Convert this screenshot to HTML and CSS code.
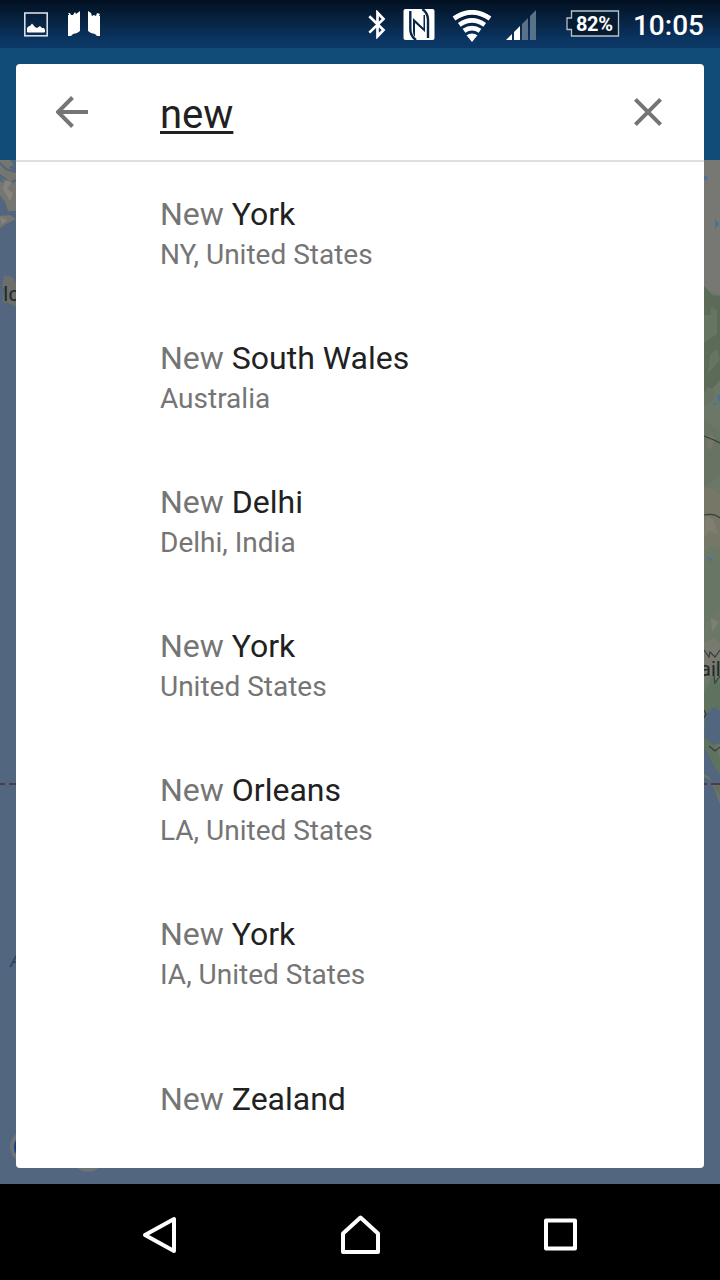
FILE: index.html
```html
<!DOCTYPE html>
<html lang="en">
<head>
<meta charset="utf-8">
<title>Place search</title>
<link rel="stylesheet" href="styles.css">
</head>
<body>
<div class="screen">
  <header class="status">
    <svg class="picture" width="24" height="25" viewBox="0 0 24 25"><rect x=".8" y="1" width="22.4" height="22.8" fill="none" stroke="#d7dde4" stroke-width="1.6"/><path d="M3 20v-4l2-2 1 0 2-2.500 3 3.500 2 1 3-2 2 2h2l1 2v2l-1 .500H4z" fill="#fff"/></svg>
    <svg class="folds" width="32" height="25" viewBox="0 0 32 25"><path d="M0 2.500 2 2l1 2h2l2-3 1 2 4-3v20l-3 2-4 1-2 2H0V4h1V3H0zM20 0l3 2 1 3 2-1 2 1 1-3 3 1-1 2h1v20h-3l-2-2-4-1-3-2z" fill="#fff"/></svg>
    <svg class="bluetooth" width="18" height="29" viewBox="0 0 18 29"><path d="M1.300 6.300 15.500 20 9.500 26.300V2.700L15.500 9 1.300 22.600" fill="none" stroke="#fff" stroke-width="2.700"/></svg>
    <svg class="nfc" width="32" height="31" viewBox="0 0 32 31"><rect x=".5" width="31" height="31" rx="2" fill="#fff"/><path d="M7.300 2v18q0 7 5.700 11M25 29V11q0-7-5.700-11" fill="none" stroke="#092848" stroke-width="2.400"/><path d="M10.500 9.500 21.500 18V4h-1.500v10.500" fill="none"/><path d="M10 9 20.500 19V6l1.500 0v17L12 14v14q-2-2-2-5z" fill="#092848"/></svg>
    <svg class="wifi" width="40" height="32" viewBox="0 0 40 32"><path d="M2 8.500Q20-4 38 8.500M7.300 14.800q12.700-9 25.400 0M12 20.800q8-5.500 16 0" fill="none" stroke="#fff" stroke-width="4.700"/><path d="M14.500 25.300q5.500-3.500 11 0L20 32z" fill="#fff"/></svg>
    <svg class="signal" width="31" height="30" viewBox="0 0 31 30"><path d="M0 30l6-6v6zM8 30v-8l6-6v14z" fill="#fff"/><path d="M16 30V14l6-6v22zM24 30V6l6-6v30z" fill="#597189"/></svg>
    <div class="battery"><svg width="54" height="28" viewBox="0 0 54 28"><path d="M5.500 1H52.500V26H5.500V19.500H1V8H5.500z" fill="#061a30" stroke="#b7c1cb" stroke-width="1.300"/></svg><span>82%</span></div>
    <time>10:05</time>
  </header>
  <main class="stage">
    <svg class="map" width="720" height="1024" viewBox="0 160 720 1024">
      <rect y="160" width="720" height="1024" fill="#53667f"/>
      <path d="M0 160h10l4 5-5 2 7 5v39H8l-3-9-5-7v-14l5 2-5-7zM0 216l10-1 6 4-10 5-6 4z" fill="#757670"/>
      <path d="M0 163l6 6 10 3M0 175l10 8 6-3" stroke="#53667f" stroke-width="2" fill="none"/>
      <path d="M5 180l7 2-5 7 6 4-3 8-7-12zM0 217l7 3-5 4z" fill="#85847e"/>
      <path d="M4 275l4 2 2-2 6 7v25l-8-4-6-1 3-13-3-3z" fill="#6b6e6b"/>
      <text class="country" x="3" y="301">Iceland</text>
      <path d="M704 160h16v644l-16-18z" fill="#6b7868"/>
      <path d="M704 160h16v134l-8-2-8-5z" fill="#777873"/>
      <path d="M704 286l8 9 8 1v84l-7 8-9 5z" fill="#5c6a58"/>
      <path d="M704 315h7v-8l6 3v24l-13 9zM710 355l7-6 3 11-8 9-4 4zM707 387l8 3-1 9-10 8v-12z" fill="#687463"/>
      <path d="M704 420l11 8 5 5v40l-16 17z" fill="#687463"/>
      <path d="M710 434l5 4-4 12-5-4zM704 487l10 2 6 6v55l-9-4-7 5z" fill="#777767"/>
      <path d="M706 516l7 3 5 15-9-3-5 7zM705 586l10 1-2 12-8-4zM711 618l8 4-7 10z" fill="#807e73"/>
      <path d="M704 560h16v48l-8 6-8 14z" fill="#687765"/>
      <path d="M704 642l10-4 6 5v17l-8 15-8 5z" fill="#78796f"/>
      <path d="M704 692l8-14 8 5v60l-5 3 5 12v42l-16-38z" fill="#5f7260"/>
      <path d="M706 714l8-7 6 4v32l-7 2-9-8z" fill="#53667f"/>
      <path d="M704 747l8 15 8 13v10h-16z" fill="#53667f"/>
      <path d="M704 779l10 8 6 17v30h-16z" fill="#53667f"/>
      <path d="M704 777l8 4 8 23v-7l-11-20-5-3z" fill="#6c776a"/>
      <path d="M704 436l10 4 6 3M704 515q10-2 16 3M704 650l5 7 1-5 5 5 5-7M714 676l1 7 5-7M704 718l2-4-2-4M709 746l6 5 5-4" fill="none" stroke="#363e3d" stroke-width="1.200"/>
      <path d="M715 219l4 5-4 5zM717 397l3-3v9zM711 405l4-3 2 2zM706 556l6 3-1 3z" fill="#476f9f"/><circle cx="705.500" cy="178" r="2" fill="#476f9f"/>
      <text class="country" x="700" y="676">aila</text>
      <path d="M0 784H720" stroke="#55374a" stroke-width="2" stroke-dasharray="9 4" stroke-dashoffset="4"/>
      <text class="ocean" x="10" y="967">Atlantic</text>
      <circle cx="27" cy="1147" r="17" fill="#6c7377"/><circle cx="27" cy="1147" r="13" fill="#173f87"/><circle cx="88" cy="1155" r="17" fill="#6c7377"/>
    </svg>
    <section class="card">
      <div class="search">
        <svg class="back" width="32" height="32" viewBox="0 0 32 32"><path d="M32 16H3M16.500 1.500 2 16l14.500 14.500" fill="none" stroke="#757575" stroke-width="4"/></svg>
        <div class="query">new</div>
        <svg class="close" width="28" height="28" viewBox="0 0 28 28"><path d="M1.400 1.400l25.200 25.200M26.600 1.400 1.400 26.600" stroke="#757575" stroke-width="4"/></svg>
      </div>
      <ul class="results">
        <li><div class="name">New <b>York</b></div><div class="region">NY, United States</div></li>
        <li><div class="name">New <b>South Wales</b></div><div class="region">Australia</div></li>
        <li><div class="name">New <b>Delhi</b></div><div class="region">Delhi, India</div></li>
        <li><div class="name">New <b>York</b></div><div class="region">United States</div></li>
        <li><div class="name">New <b>Orleans</b></div><div class="region">LA, United States</div></li>
        <li><div class="name">New <b>York</b></div><div class="region">IA, United States</div></li>
        <li><div class="name">New <b>Zealand</b></div></li>
      </ul>
    </section>
  </main>
  <nav class="navbar">
    <svg width="36" height="40" viewBox="0 0 36 40"><path d="M33 4V36L4 20z"/></svg>
    <svg width="40" height="40" viewBox="0 0 40 40"><path d="M3 37V18.500L20.500 2.500 38 18.500v18.500z"/></svg>
    <svg width="34" height="34" viewBox="0 0 34 34"><path d="M3 2.500H32V30.500H3z"/></svg>
  </nav>
</div>
</body>
</html>
```
FILE: styles.css
```css
* { box-sizing: border-box; }
body { margin: 0; font-family: Roboto, "Liberation Sans", sans-serif; }
svg { display: block; flex: none; }
.screen { width: 720px; height: 1280px; display: flex; flex-direction: column; overflow: hidden; background: #114b78; }
.status { height: 48px; display: flex; align-items: flex-start; padding: 9px 16px 0 24px; background: linear-gradient(#021020, #0b3663 85%, #0c3866); color: #fff; }
.picture { margin-top: 3px; }
.folds { margin: 2px 0 0 20px; }
.bluetooth { margin: 1px 0 0 268px; }
.nfc { margin-left: 17px; }
.wifi { margin: 1px 0 0 17px; }
.signal { margin: 1px 0 0 14px; }
.battery { margin: 1px 0 0 29px; display: grid; }
.battery > * { grid-area: 1 / 1; }
.battery span { padding-left: 10px; font-size: 20px; line-height: 28px; font-weight: 700; letter-spacing: -.4px; }
.status time { margin-left: auto; font-size: 28px; line-height: 34px; font-weight: 500; }
.stage { position: relative; height: 1136px; padding: 16px; }
.map { position: absolute; left: 0; top: 112px; }
.country { font-size: 20px; fill: #22272a; }
.ocean { font-size: 20px; font-style: italic; fill: #294366; }
.card { position: relative; height: 1104px; overflow: hidden; background: #fff; border-radius: 4px; }
.search { height: 98px; display: flex; align-items: center; padding: 0 42px 0 40px; border-bottom: 2px solid #dfdfdf; }
.query { margin: 5px auto 0 72px; font-size: 40px; line-height: 48px; color: #212121; text-decoration: underline; text-decoration-thickness: 3px; text-underline-offset: 3px; text-decoration-skip-ink: none; }
.results { margin: 0; padding: 0; list-style: none; }
.results li { height: 144px; padding: 0 20px 0 144px; display: flex; flex-direction: column; justify-content: center; }
.name { font-size: 32px; line-height: 40px; color: #757575; }
.name b { font-weight: 400; color: #212121; }
.region { margin-bottom: -1px; padding-top: 1px; font-size: 28px; line-height: 40px; color: #757575; }
.results li:last-child { padding-top: 2px; }
.navbar { height: 96px; display: flex; align-items: center; padding: 6px 143px 0 141px; justify-content: space-between; background: #000; }
.navbar path { fill: none; stroke: #fff; stroke-width: 4; stroke-linejoin: round; }
```
